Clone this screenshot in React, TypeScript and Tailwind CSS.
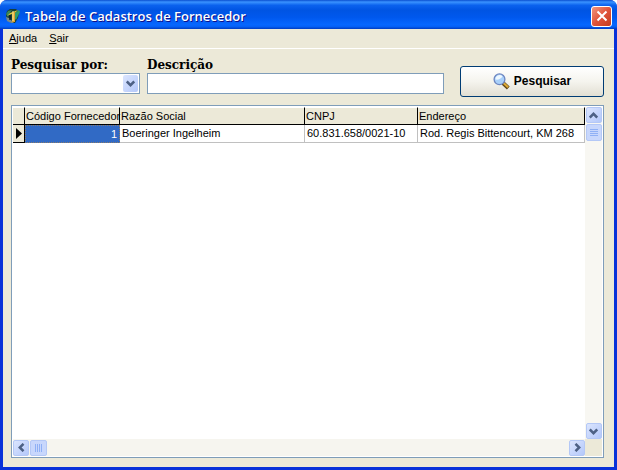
import React from "react";

const scrollButton =
  "flex size-4 shrink-0 items-center justify-center rounded-[2px] border border-[#b4c8f6] bg-linear-to-br from-[#dbe5fe] to-[#b4c8fa]";

function Chevron({ turn = "" }: { turn?: string }) {
  return (
    <svg viewBox="0 0 9 9" className={"size-[9px] " + turn} aria-hidden="true">
      <path d="M.8 2.5 4.5 6.2 8.2 2.5" fill="none" stroke="#4d6185" strokeWidth="2.5" />
    </svg>
  );
}

function AppIcon() {
  return (
    <svg viewBox="0 0 16 16" className="size-4 shrink-0" aria-hidden="true">
      <path d="M2 3 5 1h6l3 3-1 6-3 5H6l-4-4-1-4z" fill="#173f38" />
      <path d="M1 6 3 3l4-1-3 4-1 3z" fill="#39865a" />
      <path d="m1 9 3 1 3 3 2 2H6l-4-2z" fill="#7c8a88" />
      <path d="M2 8 5 5l8-3-3 3-3 1-3 1z" fill="#d8c93e" />
      <path d="M7 4h3v10H7z" fill="#d99f2e" />
      <path d="M8 3v10" stroke="#fff3a0" strokeWidth="1" />
      <path d="m10 5 4-3 1 2-2 4-2 4-1-1z" fill="#2d9c6d" />
      <path d="M5 7v5" stroke="#111d22" strokeWidth="1.5" />
    </svg>
  );
}

function Magnifier() {
  return (
    <svg viewBox="0 0 17 17" className="size-[17px] shrink-0" aria-hidden="true">
      <path d="m10 10 5.3 5" stroke="#5f4515" strokeWidth="4" />
      <path d="m10.5 10 4.6 4.3" stroke="#dca936" strokeWidth="2.2" />
      <circle cx="6.5" cy="6.3" r="5.4" fill="#a9d0fa" stroke="#6d86c0" strokeWidth="1.3" />
      <path d="M2.5 6.5a4 4 0 0 1 7-3C8 6 5 7 2.5 6.5z" fill="#eef8ff" />
    </svg>
  );
}

const headCell =
  "h-[18px] border-r border-b border-black border-t border-t-white bg-[#ece9d8] p-0 pl-px text-left font-normal whitespace-nowrap";
const bodyCell =
  "h-[18px] border-r border-b border-[#c0c0c0] p-0 pl-[2px] whitespace-nowrap";

export default function App() {
  return (
    <div className="h-screen bg-white font-['Liberation_Sans',Arial,sans-serif] text-[11px] leading-[15px] text-black">
      <div className="flex h-full flex-col overflow-hidden rounded-t-[7px] bg-[#0831d9]">
        <header className="flex h-[29px] shrink-0 items-center gap-1 bg-[linear-gradient(180deg,#0a4fd0_0%,#3a93ff_7%,#0b62ee_18%,#0054e3_35%,#0058ee_60%,#0667ff_85%,#0560f5_92%,#003cc0_100%)] pt-[3px] pr-[5px] pl-[5px]">
          <AppIcon />
          <h1 className="min-w-0 flex-1 truncate font-['Open_Sans','Noto_Sans',sans-serif] text-[13px] leading-5 font-semibold text-white [text-shadow:1px_1px_#0f1089]">
            Tabela de Cadastros de Fornecedor
          </h1>
          <button
            type="button"
            aria-label="Fechar"
            className="flex size-[21px] items-center justify-center rounded-[3px] border border-white bg-linear-to-br from-[#f0957c] via-[#e0533a] to-[#c33c1c]"
          >
            <svg viewBox="0 0 12 12" className="size-3" aria-hidden="true">
              <path d="m1.5 1.5 9 9m0-9-9 9" stroke="white" strokeWidth="2" />
            </svg>
          </button>
        </header>

        <div className="flex min-h-0 flex-1 border-x-3 border-b-3 border-[#0831d9]">
          <div className="flex min-w-0 flex-1 flex-col bg-[#ece9d8]">
            <nav className="flex h-5 shrink-0 items-center gap-3 border-b border-white pl-[6px]">
              <a href="#ajuda"><u>A</u>juda</a>
              <a href="#sair"><u>S</u>air</a>
            </nav>

            <main className="flex min-h-0 flex-1 flex-col gap-2 pt-2 pr-[10px] pb-[9px] pl-2">
              <form className="flex shrink-0 items-end" onSubmit={(e) => e.preventDefault()}>
                <div className="mr-[7px] flex w-[129px] flex-col">
                  <label htmlFor="campo" className="font-['DejaVu_Serif',serif] text-[12px] leading-4 font-bold whitespace-nowrap">
                    Pesquisar por:
                  </label>
                  <div className="grid">
                    <select id="campo" defaultValue="" className="col-start-1 row-start-1 h-[21px] w-full appearance-none border border-[#7f9db9] bg-white px-1 outline-none">
                      <option value=""></option>
                    </select>
                    <span className="pointer-events-none col-start-1 row-start-1 mr-[2px] flex h-[17px] w-[15px] items-center justify-center self-center justify-self-end rounded-[2px] bg-linear-to-br from-[#dbe5fe] to-[#b4c8fa]">
                      <Chevron />
                    </span>
                  </div>
                </div>
                <div className="mr-4 flex min-w-0 flex-1 flex-col">
                  <label htmlFor="descricao" className="font-['DejaVu_Serif',serif] text-[12px] leading-4 font-bold">
                    Descrição
                  </label>
                  <input id="descricao" type="text" className="h-[21px] w-full border border-[#7f9db9] bg-white px-1 outline-none" />
                </div>
                <button
                  type="submit"
                  className="-mb-[3px] flex h-[31px] w-36 items-center justify-center gap-1 rounded-[3px] border border-[#003c74] bg-linear-to-b from-white via-[#f5f4ee] to-[#e2dfd3] text-[12px] font-bold"
                >
                  <Magnifier />
                  Pesquisar
                </button>
              </form>

              <section className="mt-[3px] flex min-h-0 flex-1 flex-col border border-[#7f9db9] bg-white p-px">
                <div className="flex min-h-0 flex-1">
                  <div className="min-w-0 flex-1 overflow-hidden">
                    <table className="w-full table-fixed border-separate border-spacing-0">
                      <colgroup>
                        <col className="w-3" />
                        <col className="w-[95px]" />
                        <col className="w-[185px]" />
                        <col className="w-[113px]" />
                        <col />
                      </colgroup>
                      <thead>
                        <tr>
                          <th className={headCell} aria-label="Linha atual" />
                          <th className={headCell}>Código Fornecedor</th>
                          <th className={headCell}>Razão Social</th>
                          <th className={headCell}>CNPJ</th>
                          <th className={headCell}>Endereço</th>
                        </tr>
                      </thead>
                      <tbody>
                        <tr>
                          <td className="h-[18px] border-r border-b border-black bg-[#ece9d8] p-0 pl-[3px]">
                            <svg viewBox="0 0 6 11" className="h-[11px] w-[6px]" aria-hidden="true">
                              <path d="M0 0v11l6-5.5z" fill="black" />
                            </svg>
                          </td>
                          <td className="h-[18px] border border-dotted border-[#8c7c68] bg-[#316ac5] p-0 pr-[2px] text-right text-white">1</td>
                          <td className={bodyCell}>Boeringer Ingelheim</td>
                          <td className={bodyCell}>60.831.658/0021-10</td>
                          <td className={bodyCell}>Rod. Regis Bittencourt, KM 268</td>
                        </tr>
                      </tbody>
                    </table>
                  </div>
                  <div className="flex w-[17px] shrink-0 flex-col items-center bg-[#f8f7f2]">
                    <button type="button" aria-label="Rolar para cima" className={scrollButton}>
                      <Chevron turn="rotate-180" />
                    </button>
                    <div className="flex w-full flex-1 flex-col items-center pt-px">
                      <span className="flex h-[17px] w-4 flex-col items-center justify-center gap-px rounded-[2px] border border-[#b4c8f6] bg-[#c8d7fc]">
                        <i className="h-px w-2 bg-[#8fb0f5]" />
                        <i className="h-px w-2 bg-[#8fb0f5]" />
                        <i className="h-px w-2 bg-[#8fb0f5]" />
                        <i className="h-px w-2 bg-[#8fb0f5]" />
                      </span>
                    </div>
                    <button type="button" aria-label="Rolar para baixo" className={scrollButton}>
                      <Chevron />
                    </button>
                  </div>
                </div>
                <div className="flex h-[17px] shrink-0">
                  <div className="flex flex-1 items-center bg-[#f6f5ef]">
                    <button type="button" aria-label="Rolar para a esquerda" className={scrollButton}>
                      <Chevron turn="rotate-90" />
                    </button>
                    <div className="flex flex-1 pl-px">
                      <span className="flex h-4 w-[17px] items-center justify-center gap-px rounded-[2px] border border-[#b4c8f6] bg-[#c8d7fc]">
                        <i className="h-2 w-px bg-[#8fb0f5]" />
                        <i className="h-2 w-px bg-[#8fb0f5]" />
                        <i className="h-2 w-px bg-[#8fb0f5]" />
                        <i className="h-2 w-px bg-[#8fb0f5]" />
                      </span>
                    </div>
                    <button type="button" aria-label="Rolar para a direita" className={scrollButton}>
                      <Chevron turn="-rotate-90" />
                    </button>
                  </div>
                  <div className="w-[17px] bg-[#ece9d8]" />
                </div>
              </section>
            </main>
          </div>
        </div>
      </div>
    </div>
  );
}
